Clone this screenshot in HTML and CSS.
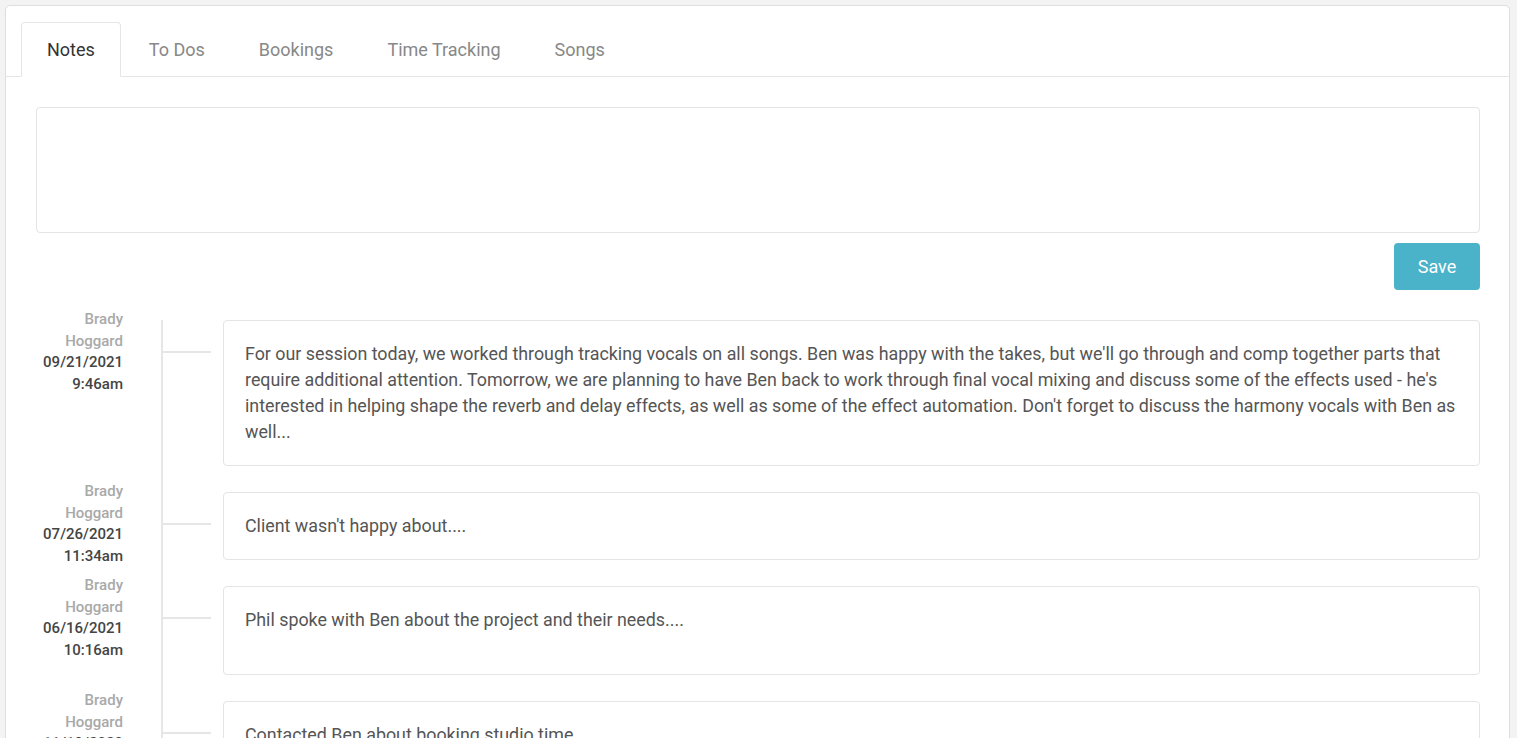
FILE: index.html
```html
<!DOCTYPE html>
<html>
<head>
<meta charset="utf-8">
<link rel="stylesheet" href="styles.css">
</head>
<body>
<div class="panel">
  <ul class="tabs">
    <li class="tab active">Notes</li>
    <li class="tab">To Dos</li>
    <li class="tab">Bookings</li>
    <li class="tab">Time Tracking</li>
    <li class="tab">Songs</li>
  </ul>
  <div class="panel-body">
    <textarea class="note-input"></textarea>
    <div class="actions"><button class="btn-save">Save</button></div>
    <div class="timeline">
      <div class="item">
        <div class="meta"><div class="author">Brady Hoggard</div><div class="when">09/21/2021 9:46am</div></div>
        <div class="rail"><span class="connector"></span></div>
        <div class="note">For our session today, we worked through tracking vocals on all songs. Ben was happy with the takes, but we'll go through and comp together parts that require additional attention. Tomorrow, we are planning to have Ben back to work through final vocal mixing and discuss some of the effects used - he's interested in helping shape the reverb and delay effects, as well as some of the effect automation. Don't forget to discuss the harmony vocals with Ben as well...</div>
      </div>
      <div class="item">
        <div class="meta"><div class="author">Brady Hoggard</div><div class="when">07/26/2021 11:34am</div></div>
        <div class="rail"><span class="connector"></span></div>
        <div class="note">Client wasn't happy about....</div>
      </div>
      <div class="item">
        <div class="meta"><div class="author">Brady Hoggard</div><div class="when">06/16/2021 10:16am</div></div>
        <div class="rail"><span class="connector"></span></div>
        <div class="note note-tall">Phil spoke with Ben about the project and their needs....</div>
      </div>
      <div class="item">
        <div class="meta"><div class="author">Brady Hoggard</div><div class="when">11/19/2020 3:02pm</div></div>
        <div class="rail"><span class="connector"></span></div>
        <div class="note">Contacted Ben about booking studio time...</div>
      </div>
    </div>
  </div>
</div>
</body>
</html>
```
FILE: styles.css
```css
html, body {
  margin: 0;
  padding: 0;
}
body {
  background: #f3f3f3;
  font-family: Roboto, "Liberation Sans", Arial, sans-serif;
  padding: 5px 7px 0 5px;
  height: 738px;
  overflow: hidden;
  box-sizing: border-box;
}
.panel {
  background: #fff;
  border: 1px solid #dedede;
  border-radius: 5px;
  min-height: 900px;
}
.tabs {
  list-style: none;
  margin: 0;
  padding: 16px 15px 0 15px;
  display: flex;
  border-bottom: 1px solid #e6e6e6;
}
.tab {
  font-size: 18px;
  line-height: 20px;
  color: #888;
  padding: 17px 25px 16px 25px;
  border: 1px solid transparent;
  border-radius: 4px 4px 0 0;
  margin-right: 2px;
  margin-bottom: -1px;
}
.tab.active {
  color: #333;
  background: #fff;
  border-color: #e6e6e6 #e6e6e6 #fff #e6e6e6;
}
.panel-body {
  padding: 30px 29px 0 30px;
}
.note-input {
  display: block;
  box-sizing: border-box;
  width: 100%;
  height: 126px;
  border: 1px solid #e4e4e4;
  border-radius: 4px;
  resize: none;
  margin: 0;
  font-family: inherit;
}
.actions {
  display: flex;
  justify-content: flex-end;
  margin-top: 10px;
}
.btn-save {
  background: #4ab2c9;
  color: #fff;
  border: none;
  border-radius: 4px;
  width: 86px;
  height: 47px;
  font-family: inherit;
  font-size: 18px;
}
.timeline {
  margin-top: 30px;
  background-image: linear-gradient(#e6e6e6, #e6e6e6);
  background-size: 2px 100%;
  background-repeat: no-repeat;
  background-position: 125px 0;
}
.item {
  display: flex;
  align-items: flex-start;
  margin-bottom: 26px;
}
.meta {
  width: 87px;
  flex: none;
  height: 0;
  margin-top: -11px;
  text-align: right;
  font-size: 15px;
  font-weight: 500;
  line-height: 21.7px;
}
.author {
  color: #a9a9a9;
}
.when {
  color: #444;
}
.rail {
  width: 100px;
  flex: none;
  margin-top: 13px;
  padding-top: 18px;
  display: flex;
}
.connector {
  display: block;
  width: 48px;
  height: 2px;
  margin-left: 40px;
  background: #e6e6e6;
}
.note {
  flex: 1;
  border: 1px solid #e4e4e4;
  border-radius: 4px;
  padding: 20px 21px 20px 21px;
  font-size: 17.85px;
  line-height: 26px;
  color: #555;
}
.note-tall {
  padding-bottom: 41px;
}
```
